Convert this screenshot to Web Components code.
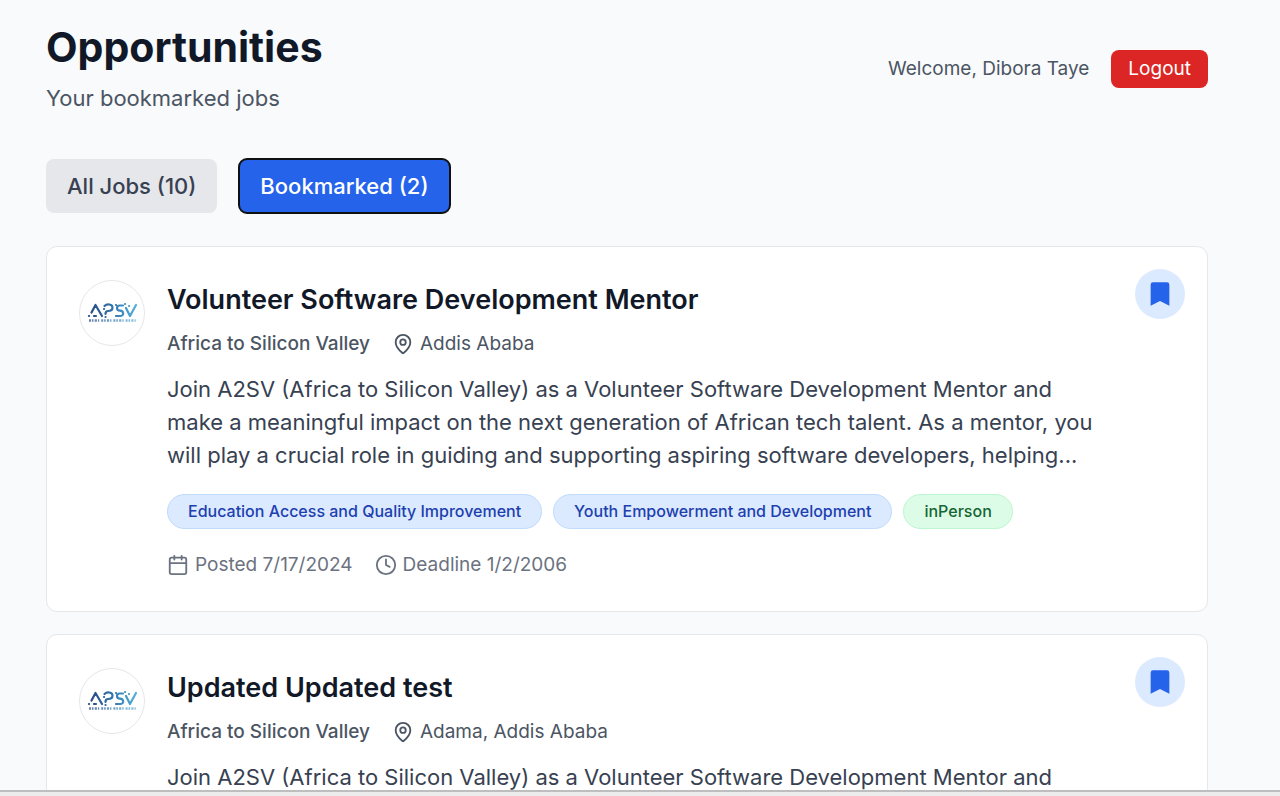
<!DOCTYPE html>
<html lang="en">
<head>
<meta charset="utf-8">
<title>Opportunities</title>
<style>
  html, body { margin: 0; height: 100%; }
  body { font-family: Inter, "Liberation Sans", sans-serif; background: #f9fafb; color: #111827; overflow: hidden; }
</style>
</head>
<body>
<jobs-page>
  <page-header slot="header" user="Dibora Taye">
    <span slot="title">Opportunities</span>
    <span slot="subtitle">Your bookmarked jobs</span>
  </page-header>
  <job-tabs slot="tabs"></job-tabs>
  <job-card place="Addis Ababa" posted="7/17/2024" deadline="1/2/2006">
    <span slot="title">Volunteer Software Development Mentor</span>
    <span slot="org">Africa to Silicon Valley</span>
    <span slot="text">Join A2SV (Africa to Silicon Valley) as a Volunteer Software Development Mentor and make a meaningful impact on the next generation of African tech talent. As a mentor, you will play a crucial role in guiding and supporting aspiring software developers, helping...</span>
    <job-tag slot="tags">Education Access and Quality Improvement</job-tag>
    <job-tag slot="tags">Youth Empowerment and Development</job-tag>
    <job-tag slot="tags" kind="type">inPerson</job-tag>
  </job-card>
  <job-card place="Adama, Addis Ababa">
    <span slot="title">Updated Updated test</span>
    <span slot="org">Africa to Silicon Valley</span>
    <span slot="text">Join A2SV (Africa to Silicon Valley) as a Volunteer Software Development Mentor and</span>
  </job-card>
</jobs-page>

<script>
class BaseElement extends HTMLElement {
  connectedCallback() {
    if (!this.shadowRoot) this.attachShadow({ mode: "open" }).innerHTML = this.render();
  }
}

customElements.define("jobs-page", class extends BaseElement {
  render() {
    return `<style>
      :host { display: flex; flex-direction: column; height: 100vh; }
      main { flex: 1; min-height: 0; overflow: hidden; padding: 22px 72px 0 46px; }
      .list { display: flex; flex-direction: column; gap: 22px; }
      footer { flex: none; height: 4px; background: #ececec; border-top: 2px solid #bebebe; }
    </style>
    <main>
      <slot name="header"></slot>
      <slot name="tabs"></slot>
      <div class="list"><slot></slot></div>
    </main>
    <footer></footer>`;
  }
});

customElements.define("page-header", class extends BaseElement {
  render() {
    return `<style>
      :host { display: flex; justify-content: space-between; align-items: center; margin-bottom: 44px; }
      h1 { margin: 0 0 10px; font-size: 41px; line-height: 50px; font-weight: 700; }
      p { margin: 0; font-size: 22px; line-height: 33px; color: #4b5563; }
      .user { display: flex; align-items: center; gap: 22px; font-size: 19px; line-height: 28px; color: #4b5563; }
      button { font: inherit; color: #fff; background: #dc2626; border: 0; border-radius: 8px; padding: 5px 17px; cursor: pointer; }
    </style>
    <div><h1><slot name="title"></slot></h1><p><slot name="subtitle"></slot></p></div>
    <div class="user"><span>Welcome, ${this.getAttribute("user")}</span><button type="button">Logout</button></div>`;
  }
});

customElements.define("job-tabs", class extends BaseElement {
  render() {
    return `<style>
      :host { display: flex; gap: 22px; margin-bottom: 33px; }
      button { font: inherit; font-size: 22px; line-height: 32px; font-weight: 500; border: 0; border-radius: 8px; padding: 11px 21px; background: #e5e7eb; color: #374151; cursor: pointer; }
      button[aria-pressed="true"] { background: #2563eb; color: #fff; outline: 2px solid #101010; outline-offset: -1px; }
    </style>
    <button type="button" aria-pressed="false">All Jobs (10)</button>
    <button type="button" aria-pressed="true">Bookmarked (2)</button>`;
  }
});

customElements.define("job-tag", class extends BaseElement {
  render() {
    return `<style>
      :host { display: block; font-size: 16px; line-height: 21px; font-weight: 500; padding: 6px 20px; border: 1px solid #bfdbfe; border-radius: 18px; background: #dbeafe; color: #1e40af; }
      :host([kind="type"]) { border-color: #bbf7d0; background: #dcfce7; color: #166534; }
    </style><slot></slot>`;
  }
});

customElements.define("org-logo", class extends BaseElement {
  render() {
    return `<style>
      :host { display: block; flex: none; box-sizing: border-box; width: 66px; height: 66px; border: 1px solid #e5e7eb; border-radius: 50%; background: #fff; overflow: hidden; }
      svg { display: block; }
    </style>
    <svg width="64" height="64" viewBox="0 0 64 64" fill="none" aria-hidden="true">
      <defs><linearGradient id="g" gradientUnits="userSpaceOnUse" x1="8" y1="0" x2="57" y2="0">
        <stop stop-color="#27477f"/><stop offset=".5" stop-color="#3275ad"/><stop offset="1" stop-color="#55b2dd"/></linearGradient></defs>
      <g stroke="url(#g)" stroke-width="2.2" stroke-linecap="round" stroke-linejoin="round">
        <path d="M9 35h.1M11.500 31.500L15.500 24l6.500 11M14 35h2"/>
        <path d="M24.500 25c2.500-2.500 8-2 8 1.500 0 3-2.500 3.500-4.500 3.500s-2.500 1.500-2.500 3M25.500 36h.1M24 28h.1"/>
        <path d="M43 24.500h-3c-4 0-4 5 0 5.200s4.500 5.300 0 5.300h-4M36 24h.1"/>
        <path d="M46 27l4 8 6-11M45 23h.1M49 25h.1"/>
      </g>
      <path d="M9 39.500H56" stroke="url(#g)" stroke-width="2.400" stroke-dasharray="2 .9 1.600 1.200 2.200 1 1.300 2" opacity=".7"/>
    </svg>`;
  }
});

customElements.define("job-card", class extends BaseElement {
  render() {
    const a = n => this.getAttribute(n);
    const icon = body => `<svg viewBox="0 0 24 24" fill="none" stroke="currentColor" stroke-width="2" stroke-linecap="round" stroke-linejoin="round" aria-hidden="true">${body}</svg>`;
    const dates = a("posted") ? `<div class="row dates">
        <span class="item">${icon('<path d="M8 2v4M16 2v4M3 10h18M5 4h14a2 2 0 0 1 2 2v14a2 2 0 0 1-2 2H5a2 2 0 0 1-2-2V6a2 2 0 0 1 2-2z"/>')}Posted ${a("posted")}</span>
        <span class="item">${icon('<circle cx="12" cy="12" r="10"/><path d="M12 6v6l4 2"/>')}Deadline ${a("deadline")}</span>
      </div>` : "";
    return `<style>
      :host { display: flex; gap: 22px; position: relative; padding: 33px 33px 32px 32px; border: 1px solid #e5e7eb; border-radius: 11px; background: #fff; }
      .body { flex: 1; min-width: 0; }
      h2 { margin: 0 0 10px; font-size: 27px; line-height: 40px; font-weight: 600; }
      .row { display: flex; align-items: center; gap: 22px; font-size: 19px; line-height: 28px; }
      .meta { color: #4b5563; margin-bottom: 15px; }
      .org { font-weight: 500; }
      .item { display: flex; align-items: center; gap: 6px; }
      .item svg { width: 22px; height: 22px; }
      p { margin: 0 77px 22px 0; font-size: 22px; line-height: 33px; color: #374151; }
      .tags { display: flex; flex-wrap: wrap; gap: 11px; margin-bottom: 22px; }
      .dates { color: #6b7280; }
      button { position: absolute; top: 22px; right: 22px; width: 50px; height: 50px; display: grid; place-items: center; padding: 0; border: 0; border-radius: 50%; background: #dbeafe; color: #2563eb; cursor: pointer; }
      button svg { width: 28px; height: 28px; }
    </style>
    <org-logo></org-logo>
    <div class="body">
      <h2><slot name="title"></slot></h2>
      <div class="row meta">
        <span class="org"><slot name="org"></slot></span>
        <span class="item">${icon('<path d="M20 10c0 5-5.500 10.200-7.400 11.800a1 1 0 0 1-1.200 0C9.500 20.200 4 15 4 10a8 8 0 0 1 16 0z"/><circle cx="12" cy="10" r="3"/>')}${a("place")}</span>
      </div>
      <p><slot name="text"></slot></p>
      <div class="tags"><slot name="tags"></slot></div>
      ${dates}
    </div>
    <button type="button" aria-label="Remove bookmark"><svg viewBox="0 0 24 24" fill="currentColor" aria-hidden="true"><path d="M6 2h12a2 2 0 0 1 2 2v18l-8-4-8 4V4a2 2 0 0 1 2-2z"/></svg></button>`;
  }
});
</script>
</body>
</html>
